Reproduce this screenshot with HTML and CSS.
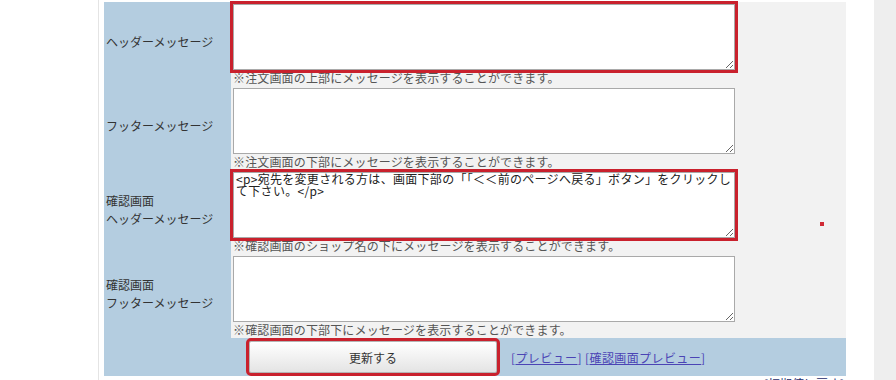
FILE: index.html
```html
<!DOCTYPE html>
<html>

<head>
  <meta charset="utf-8">
  <link rel="stylesheet" href="styles.css">
</head>

<body>
  <div class="page">
    <div class="side-left"></div>
    <div class="main">
      <table class="form-table">
        <tr>
          <th>ヘッダーメッセージ</th>
          <td>
            <textarea class="marked" name="header_msg"></textarea>
            <div class="note">※注文画面の上部にメッセージを表示することができます。</div>
          </td>
        </tr>
        <tr>
          <th>フッターメッセージ</th>
          <td>
            <textarea name="footer_msg"></textarea>
            <div class="note">※注文画面の下部にメッセージを表示することができます。</div>
          </td>
        </tr>
        <tr>
          <th>確認画面<br>ヘッダーメッセージ</th>
          <td>
            <textarea class="marked" name="confirm_header_msg">&lt;p&gt;宛先を変更される方は、画面下部の「「＜＜前のページへ戻る」ボタン」をクリックして下さい。&lt;/p&gt;</textarea>
            <div class="note">※確認画面のショップ名の下にメッセージを表示することができます。</div>
          </td>
        </tr>
        <tr>
          <th>確認画面<br>フッターメッセージ</th>
          <td>
            <textarea name="confirm_footer_msg"></textarea>
            <div class="note">※確認画面の下部下にメッセージを表示することができます。</div>
          </td>
        </tr>
        <!-- submit row -->
        <tr class="submit-row">
          <th></th>
          <td>
            <div class="actions">
              <button type="button" class="submitbtn marked">更新する</button>
              <span class="links">[<a href="#">プレビュー</a>] [<a href="#">確認画面プレビュー</a>]</span>
            </div>
          </td>
        </tr>
      </table>
      <div class="reset"><a href="#">[初期値に戻す]</a></div>
      <span class="dot"></span>
    </div>
    <div class="side-right"></div>
  </div>
</body>

</html>
```

FILE: styles.css
```css
* {
  box-sizing: border-box;
}

body {
  margin: 0;
  background: #fff;
  font-family: "Noto Sans CJK JP", "Liberation Sans", sans-serif;
  font-size: 12px;
  color: #333;
}

.page {
  display: flex;
  height: 380px;
  overflow: hidden;
}

.side-left {
  width: 98px;
}

/* main content column */
.main {
  position: relative;
  width: 776px;
  border-left: 1px solid #e4e4e4;
  padding: 2px 28px 0 5px;
}

.side-right {
  flex: 1;
  background: #eeeeee;
}

.form-table {
  width: 742px;
  border-collapse: collapse;
}

.form-table th {
  width: 127px;
  padding: 0 2px 4px 2px;
  background: #b4cde0;
  font-weight: normal;
  text-align: left;
  line-height: 18px;
  vertical-align: middle;
}

.form-table td {
  padding: 2px 0 1px 2px;
  background: #f2f2f2;
}

textarea {
  display: block;
  width: 502px;
  height: 66px;
  padding: 0 2px 1px 2px;
  border: 1px solid #a9a9a9;
  background: #fff;
  font-family: "Noto Sans CJK JP", sans-serif;
  font-size: 12px;
  line-height: 12px;
  letter-spacing: 0.3px;
  color: #222;
  resize: both;
}

.note {
  height: 15px;
  line-height: 15px;
  letter-spacing: 0.15px;
  color: #555;
  white-space: nowrap;
}

/* red highlight boxes */
.marked {
  outline: 3px solid #c9212d;
  outline-offset: 0;
}

.submit-row th,
.submit-row td {
  background: #b4cde0;
  padding: 3px 0;
}

.actions {
  display: flex;
  align-items: center;
  gap: 14px;
  padding-left: 18px;
}

.submitbtn {
  width: 248px;
  height: 32px;
  border: 1px solid #b5b5b5;
  border-radius: 2px;
  background: linear-gradient(#ffffff, #e4e4e4);
  font-family: "Noto Sans CJK JP", sans-serif;
  font-size: 12px;
  color: #333;
}

.links {
  color: #4b44b5;
  letter-spacing: 0.4px;
}

.links a {
  color: #4b44b5;
}

.reset {
  width: 742px;
  text-align: right;
  line-height: 15px;
  padding-right: 2px;
}

.reset a {
  color: #1d2a6b;
  text-decoration: none;
}

.dot {
  position: absolute;
  left: 721px;
  top: 222px;
  width: 4px;
  height: 4px;
  background: #d02a35;
}
```
